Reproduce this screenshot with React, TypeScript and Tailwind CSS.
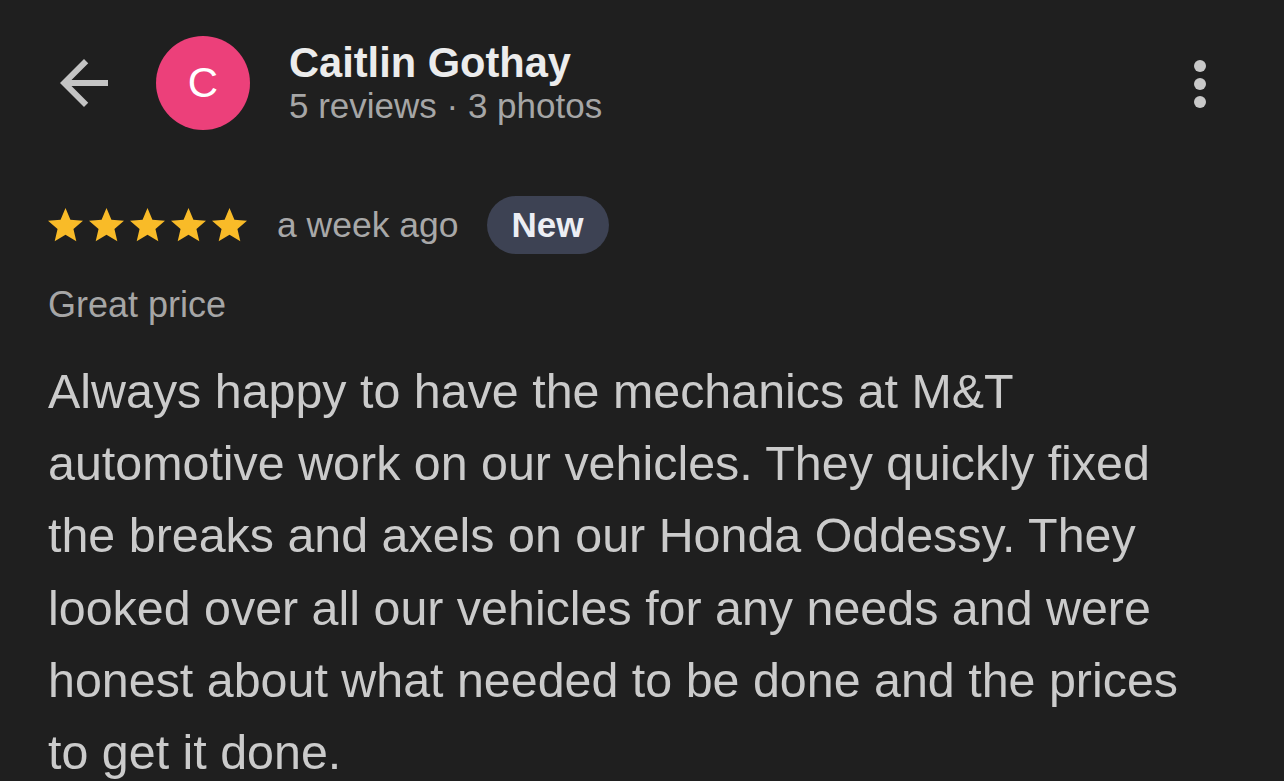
const lines = [
  "Always happy to have the mechanics at M&T",
  "automotive work on our vehicles. They quickly fixed",
  "the breaks and axels on our Honda Oddessy. They",
  "looked over all our vehicles for any needs and were",
  "honest about what needed to be done and the prices",
  "to get it done.",
];

function Star() {
  return (
    <svg viewBox="2 2 20 19.3" className="h-[34px] w-[35px]" fill="#f9bb28">
      <path d="M12 17.27L18.18 21l-1.64-7.03L22 9.24l-7.19-.61L12 2 9.19 8.63 2 9.24l5.46 4.73L5.82 21z" />
    </svg>
  );
}

export default function App() {
  return (
    <div
      className="min-h-screen w-full overflow-hidden bg-[#1f1f1f]"
      style={{ fontFamily: '"Liberation Sans", Arial, sans-serif' }}
    >
      {/* Header */}
      <div className="flex items-center pl-[48px] pr-[78px] pt-[36px]">
        <svg viewBox="0 0 24 24" className="h-[72px] w-[72px]" fill="#c4c4c4">
          <path d="M20 11H7.83l5.59-5.59L12 4l-8 8 8 8 1.41-1.41L7.83 13H20v-2z" />
        </svg>
        <div className="ml-[36px] flex h-[94px] w-[94px] items-center justify-center rounded-full bg-[#ec407a]">
          <span className="text-[42px] leading-none text-white">C</span>
        </div>
        <div className="ml-[39px] flex flex-col">
          <span className="text-[41.6px] font-bold leading-[46px] text-[#ececec]">
            Caitlin Gothay
          </span>
          <span className="text-[35px] leading-[40px] text-[#a6a6a6]">
            5 reviews · 3 photos
          </span>
        </div>
        <div className="ml-auto flex flex-col gap-[6px] pt-[2px]">
          <span className="h-[12px] w-[12px] rounded-full bg-[#c8c8c8]" />
          <span className="h-[12px] w-[12px] rounded-full bg-[#c8c8c8]" />
          <span className="h-[12px] w-[12px] rounded-full bg-[#c8c8c8]" />
        </div>
      </div>

      {/* Rating row */}
      <div className="mt-[66px] flex items-center px-[48px]">
        <div className="flex gap-[6px]">
          <Star />
          <Star />
          <Star />
          <Star />
          <Star />
        </div>
        <span className="ml-[30px] text-[35.5px] leading-[40px] text-[#a8a8a8]">
          a week ago
        </span>
        <span className="ml-[28px] flex h-[58px] items-center rounded-full bg-[#3d4253] px-[25px] text-[35px] font-semibold text-[#eceef4]">
          New
        </span>
      </div>

      <p className="mt-[31px] px-[48px] text-[36px] leading-[40px] text-[#a6a6a6]">
        Great price
      </p>

      {/* Review body */}
      <div className="mt-[30px] px-[48px] text-[48.4px] leading-[72.2px] text-[#cbcbcb]">
        {lines.map((l) => (
          <div key={l} className="whitespace-nowrap">
            {l}
          </div>
        ))}
      </div>
    </div>
  );
}
